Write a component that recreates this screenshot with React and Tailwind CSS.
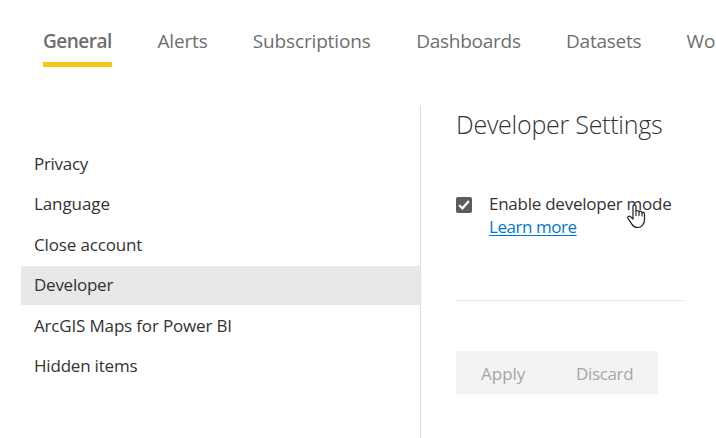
const tabs = [
  { label: "General", box: "w-[69px]", text: "font-semibold tracking-[-0.5px]", active: true },
  { label: "Alerts", box: "w-[50px]", text: "tracking-[-0.15px]" },
  { label: "Subscriptions", box: "w-[118px]", text: "tracking-[-0.15px]" },
  { label: "Dashboards", box: "w-[104.5px]", text: "tracking-[-0.25px]" },
  { label: "Datasets", box: "w-[75px]", text: "tracking-[-0.25px]" },
  { label: "Wo", box: "w-[30px]", text: "tracking-[-0.1px]" },
];

const items = [
  { label: "Privacy", text: "tracking-[-0.3px]" },
  { label: "Language", text: "tracking-[-0.1px]" },
  { label: "Close account", text: "tracking-[-0.15px]" },
  { label: "Developer", text: "tracking-[-0.25px]", active: true },
  { label: "ArcGIS Maps for Power BI", text: "tracking-[-0.17px]" },
  { label: "Hidden items", text: "tracking-[-0.2px]" },
];

function HandCursor() {
  return (
    <svg className="absolute left-[627px] top-[204px] h-[25px] w-[19px]" viewBox="0 0 19 25">
      <path
        d="M6 14.5V2.2C6 .3 9 .3 9 2.2V7.5C9.3 6 12 6.2 12 8C12.6 6.6 15 7 15 9C15.5 7.8 17.5 8.2 17.5 10V16C17.5 19 16 20.3 15.2 21.5C14.3 22.8 12.5 23.5 10.5 23.5C7.5 23.5 6 22 5 20.4L1 14.5C0 12.7 2.2 11.4 3.5 12.6L6 15Z"
        fill="white"
        stroke="#1b1b2b"
        strokeWidth="1.2"
        strokeLinejoin="round"
      />
      <path d="M9 7.5V12M12 8V12M15 9V12.5" stroke="#1b1b2b" strokeWidth="1.1" />
    </svg>
  );
}

export default function App() {
  return (
    <div className="relative flex h-[438px] w-[716px] flex-col overflow-hidden bg-white font-['Open_Sans',sans-serif] text-[17px] text-[#333]">
      <nav className="flex h-[106px] shrink-0 gap-[45.4px] pl-[43px] pt-[27px] text-[19px] text-[#6e6e6e]">
        {tabs.map((t) => (
          <div key={t.label} className={`${t.box} h-10 shrink-0 border-b-[5px] ${t.active ? "border-[#f2c811]" : "border-transparent"}`}>
            <span className={`block whitespace-nowrap leading-[28px] ${t.text}`}>{t.label}</span>
          </div>
        ))}
      </nav>
      <div className="flex flex-1">
        <aside className="w-[421px] shrink-0 border-r border-[#dedede] pl-[21px] pt-[38px]">
          {items.map((i) => (
            <div key={i.label} className={`h-[39px] pl-[13px] ${i.active ? "mb-[1px] mt-[1.8px] bg-[#e8e8e8] leading-[38.2px]" : "mb-[1.4px] leading-[39px]"}`}>
              <span className={`whitespace-nowrap ${i.text}`}>{i.label}</span>
            </div>
          ))}
        </aside>
        <main className="pl-[35px]">
          <h1 className="h-[40px] whitespace-nowrap text-[25px] font-light leading-[36px] tracking-[-0.25px]">Developer Settings</h1>
          <div className="mt-[46px] flex h-[109px] w-[228px] border-b border-[#e6e6e6]">
            <span className="mt-[5px] flex h-4 w-4 shrink-0 items-center justify-center rounded-[2px] bg-[#5c5c5c]">
              <svg className="h-4 w-4" viewBox="0 0 16 16" fill="none">
                <path d="M3.2 8.2L6.4 11.3L12.9 4" stroke="white" strokeWidth="2.2" />
              </svg>
            </span>
            <div className="pl-[17px] leading-[23px]">
              <div className="whitespace-nowrap tracking-[-0.25px]">Enable developer mode</div>
              <a className="text-[#0078d4] underline decoration-1 underline-offset-2 tracking-[-0.45px]">Learn more</a>
            </div>
          </div>
          <div className="mt-[50px] flex h-[43px] w-[202px] bg-[#f3f3f3] pl-[25px] leading-[45px] text-[#a6a6a6]">
            <span className="w-[95px] tracking-[0px]">Apply</span>
            <span className="tracking-[-0.35px]">Discard</span>
          </div>
        </main>
      </div>
      <HandCursor />
    </div>
  );
}
